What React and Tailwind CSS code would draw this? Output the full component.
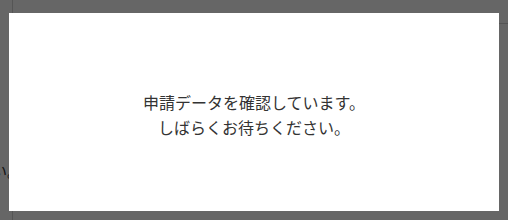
export default function App() {
  return (
    <div className="relative h-[220px] w-[508px] overflow-hidden bg-white font-['Noto_Sans_CJK_JP',sans-serif] text-[#333]">
      {/* page behind the dialog */}
      <div className="flex h-full">
        <div className="w-[12px] shrink-0" />
        <div className="flex-1 border-l border-[#d4d4d4]">
          <div className="mt-[23px] ml-auto w-[20px] border-t border-[#d4d4d4]" />
        </div>
      </div>
      <p className="absolute left-[-8px] top-[158px] text-[15px] leading-[25px]">い。</p>

      {/* overlay + dialog */}
      <div className="fixed inset-0 bg-black/60 pl-[9px] pt-[13px]">
        <div className="flex h-[198px] w-[490px] items-center justify-center bg-white pt-[6px]">
          <p className="text-center text-[16px] leading-[25px] text-[#333]">
            申請データを確認しています。
            <br />
            しばらくお待ちください。
          </p>
        </div>
      </div>
    </div>
  )
}
